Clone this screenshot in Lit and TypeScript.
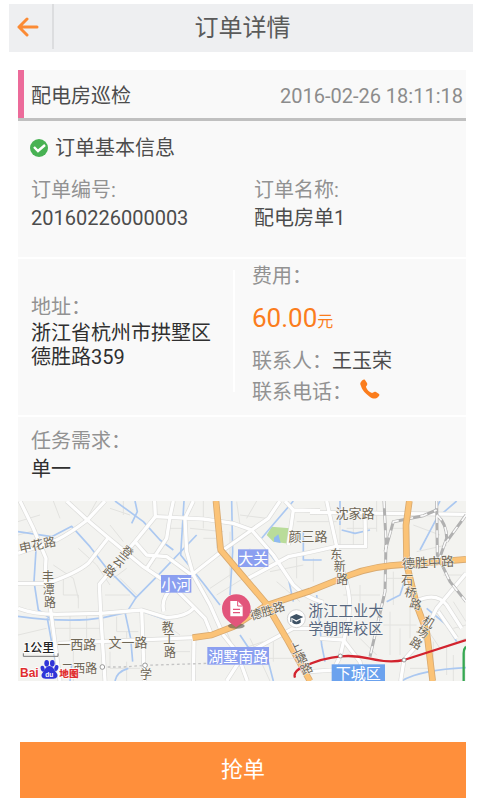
import { LitElement, html, svg, css } from "lit";
import { customElement, property } from "lit/decorators.js";

type Label = { t: string; x: number; y: number; s?: number; r?: number; c?: string };

/* Casing and surface are drawn from the same list of road paths. */
const ROADS = [
  "M30 18 L70 100 L108 190 L105 250 L122 345 L150 558",
  "M170 18 L232 75 L295 128 L400 215 L455 252",
  "M285 18 L232 75 Q180 115 140 135 L24 175",
  "M24 266 L110 266 Q200 235 235 205 L295 128",
  "M434 18 L436 65 L375 140 L268 268 L272 355 L285 558",
  "M24 340 Q70 358 140 358 L272 355 L395 345 L470 368 Q530 365 550 340",
  "M436 65 L580 72 L670 85 L725 105 L790 180 L850 270 Q890 310 940 322",
  "M375 140 L410 180 L470 185 L545 240",
  "M490 18 L480 65 L470 130 L410 220",
  "M145 445 L552 428",
  "M395 345 L403 558",
  "M810 18 L775 70 L725 105 L640 165 L545 240 L490 275 Q450 310 462 350",
  "M550 18 L525 70 L530 170 L550 240 L600 330 L640 420 L680 470 L712 558",
  "M490 275 L550 335 L585 370 L602 412",
  "M552 428 L550 558",
  "M825 18 L850 45 L930 47 M850 45 L835 150",
  "M715 250 L835 185 L900 172 L975 155 L1067 155 L1065 60",
  "M650 558 L700 480 L850 400 L930 400",
  "M950 18 L990 200 L1005 250 Q1030 320 1010 400 L990 485",
  "M930 430 L1000 435 L1050 500 L1060 558",
  "M900 52 L1368 58",
  "M1368 235 L1280 340 L1230 440 L1182 495 L1172 558",
  "M1220 318 Q1280 290 1310 330 L1355 400 M1285 350 L1340 430",
  "M900 530 L970 525 L990 485",
];

const LANES = [
  "M24 80 L90 60 M130 18 L150 70 M24 120 L80 105 M190 100 L220 90 L260 18 M130 210 L190 250 L205 310 M160 250 L160 300 H205 V340",
  "M205 160 L260 210 L300 270 M300 40 L360 60 M340 18 V60 M300 90 L340 140 M330 250 L380 300 M230 358 V440 M180 360 V440 M130 400 H270",
  "M320 365 V410 H385 M350 410 V440 M310 250 L350 220 M285 300 H360 M24 420 L110 400 M190 460 V558 M300 470 V520 H390 M350 560 V500",
  "M470 100 H525 M540 100 L640 110 M580 18 V100 M620 30 V160 M580 130 H625 M680 20 L690 90 M740 18 L710 70 M690 60 L770 70 M860 80 H980",
  "M660 110 V250 M620 300 L700 250 M600 280 L660 240 M720 160 L690 210 M780 230 L880 210 M800 260 L870 320 M860 180 V250 M910 190 V260",
  "M700 460 L760 440 M650 410 L690 500 M720 430 L780 558 M740 490 H850 M790 440 V500 M470 390 L510 420 M470 470 H540",
  "M990 80 V150 M1010 100 H1100 M1030 60 V155 M1100 18 V110 M1140 100 H1180 M1210 90 L1290 120 M1220 170 L1310 150 M1050 270 V320 M1000 300 H1110",
  "M1130 250 H1180 M1150 230 V330 M1120 390 H1220 M1140 350 V480 M1170 400 V480 M1200 330 V430 M1300 240 H1368 M1330 320 L1368 380",
  "M1250 400 L1290 460 L1368 430 M1270 440 V520 M1310 450 V540 M1050 430 L1100 480 M1200 520 H1260 M1330 480 V558 M1330 400 L1368 390",
];

const WATER = [
  "M24 110 L125 125 L185 94 L240 155 L290 220 L378 308 L450 235 L560 120",
  "M315 18 L400 80 L450 135 L490 165",
  "M375 18 L382 50 L365 85",
  "M78 165 L72 260 L85 345 L120 370",
  "M24 364 Q180 385 280 368 L350 352 L378 308",
  "M112 370 L130 470 L150 558 M345 352 L362 430 L368 500 M400 350 L470 375",
  "M522 18 L512 180 L580 265 L630 330 M665 18 L668 170 L660 300",
  "M690 420 L730 480 L775 500 L790 558 M850 18 L780 100 L755 130 M760 150 L835 250 L850 320",
  "M880 110 V195 H935 M990 18 V90 M995 105 L1035 115 L1080 105",
  "M1340 18 L1280 70 L1230 165 M1130 320 L1170 300 L1190 240 M1250 340 L1310 390 L1340 440",
  "M1175 558 Q1230 525 1368 518 M920 300 L935 450 L945 500 M1290 18 L1270 55",
  "M180 558 L185 510 M315 558 Q320 530 355 520",
];

const HIGHWAYS = [
  "M618 18 L632 165 L768 325 L835 440 L900 558",
  "M548 428 L605 420 L670 395 L768 332 L900 288 L1020 240 Q1090 212 1190 208 L1368 193",
  "M1198 18 L1188 90 L1190 208 L1220 330 L1250 410 L1268 558",
];

const RAILS = [
  "M1122 18 L1128 140 L1125 290 L1080 485",
  "M1280 18 L1282 180 L1320 260 L1368 320",
  "M1125 170 L1150 80 L1240 62 L1280 45",
  "M1280 60 Q1310 85 1310 130 L1285 200 M1368 60 L1310 140",
];

const LABELS: Label[] = [
  { t: "申花路", x: 82, y: 148, r: -12, s: 37 },
  { t: "登", x: 354, y: 168, r: 38 },
  { t: "云", x: 330, y: 196, r: 38 },
  { t: "路", x: 302, y: 226, r: 38 },
  { t: "丰", x: 114, y: 242 },
  { t: "潭", x: 116, y: 280 },
  { t: "路", x: 120, y: 319 },
  { t: "一西路", x: 200, y: 446, s: 39 },
  { t: "文一路", x: 354, y: 440, s: 39 },
  { t: "二西路", x: 208, y: 517, s: 36 },
  { t: "学", x: 408, y: 536 },
  { t: "教", x: 473, y: 394 },
  { t: "工", x: 478, y: 431 },
  { t: "路", x: 480, y: 470 },
  { t: "颜三路", x: 894, y: 122, s: 39 },
  { t: "沈家路", x: 1035, y: 53, s: 39 },
  { t: "东", x: 979, y: 174 },
  { t: "新", x: 989, y: 212 },
  { t: "路", x: 997, y: 249 },
  { t: "德胜路", x: 771, y: 344, r: -17 },
  { t: "德胜中路", x: 1254, y: 200, s: 39, r: -3 },
  { t: "石", x: 1192, y: 252 },
  { t: "桥", x: 1203, y: 290, r: 10 },
  { t: "路", x: 1218, y: 324, r: 15 },
  { t: "上", x: 855, y: 456, r: -25 },
  { t: "塘", x: 872, y: 486, r: -25 },
  { t: "路", x: 888, y: 518, r: -25 },
  { t: "机", x: 1258, y: 378, r: 32 },
  { t: "场", x: 1240, y: 408, r: 32 },
  { t: "路", x: 1220, y: 442, r: 32 },
  { t: "浙江工业大", x: 1007, y: 342, s: 45, c: "campus" },
  { t: "学朝晖校区", x: 1007, y: 396, s: 45, c: "campus" },
];

const DISTRICTS = [
  { t: "大关", x: 684, y: 163, w: 91, h: 53 },
  { t: "小河", x: 453, y: 240, w: 91, h: 53 },
  { t: "湖墅南路", x: 592, y: 456, w: 185, h: 53 },
  { t: "下城区", x: 965, y: 508, w: 160, h: 50, c: "city" },
];

@customElement("order-map")
class OrderMap extends LitElement {
  static styles = css`
    :host { display: block; height: 180px; overflow: hidden; }
    svg { display: block; width: 100%; height: 100%; font-family: "Noto Sans CJK SC", sans-serif; }
    .land { fill: #f3f3f0; }
    .line { fill: none; stroke-linejoin: round; }
    .lane { stroke: #e2e2df; stroke-width: 3; }
    .water { stroke: #abc8f1; stroke-width: 5; }
    .casing { stroke: #dcdcda; stroke-width: 14; }
    .road { stroke: #fefefe; stroke-width: 10; }
    .hw-casing { stroke: #d9aa70; stroke-width: 20; }
    .hw { stroke: #fbc377; stroke-width: 15; }
    .rail { stroke: #b0b0b0; stroke-width: 9; }
    .sleeper { stroke: #fafafa; stroke-width: 5; stroke-dasharray: 22 22; }
    .metro { stroke: #d2232e; stroke-width: 7; }
    .metro-green { stroke: #36a852; stroke-width: 7; }
    .station { fill: #fff; stroke: #999; stroke-width: 3; }
    .planned { stroke: #c4c4c4; stroke-width: 4; stroke-dasharray: 8 8; }
    .label { fill: #6e6656; stroke: #f8f8f5; stroke-width: 3; paint-order: stroke; text-anchor: middle; dominant-baseline: central; }
    .campus { fill: #57677f; }
    .district { fill: #8b9ff0; }
    .city { fill: #6ba2ee; }
    .district-name { fill: #fff; font-size: 45px; text-anchor: middle; dominant-baseline: central; }
    .scale { fill: #222; font-size: 36px; font-weight: 500; stroke: #fff; stroke-width: 5; paint-order: stroke; }
    .brand { fill: #e02d2e; font-family: "Liberation Sans", sans-serif; font-weight: bold; font-size: 36px; stroke: #fff; stroke-width: 4; paint-order: stroke; }
    .brand-cn { font-family: "Noto Sans CJK SC", sans-serif; font-size: 29px; font-weight: 900; }
    .paw { fill: #3035d8; }
    .du { fill: #fff; font: bold 20px "Liberation Sans", sans-serif; text-anchor: middle; }
  `;

  render() {
    const lines = (paths: string[], cls: string) => paths.map((d) => svg`<path class="line ${cls}" d=${d} />`);
    return html`
      <svg viewBox="24 18 1344 540" preserveAspectRatio="xMidYMid slice" role="img" aria-label="地图">
        <rect class="land" x="-600" y="0" width="2600" height="600" />
        <path d="M785 95 L840 100 L838 146 L790 140 L770 120 Z" fill="#b9dc9a" />
        <path d="M792 128 L805 118 L812 144 L792 140 Z" fill="#8fb9f2" />
        ${lines(LANES, "lane")} ${lines(WATER, "water")} ${lines(ROADS, "casing")}
        ${lines(ROADS, "road")} ${lines(RAILS, "rail")} ${lines(RAILS, "sleeper")}
        ${lines(HIGHWAYS, "hw-casing")} ${lines(HIGHWAYS, "hw")}
        <path class="line planned" d="M277 516 H340 L405 511 L630 504" />
        <path class="line metro" d="M855 548 Q848 530 880 515 Q940 488 992 484 Q1035 480 1080 491 Q1140 505 1182 495 L1368 435" />
        <path class="line metro-green" d="M1368 455 Q1361 462 1361 475 V558" />
        <circle class="station" cx="991" cy="483" r="6" />
        <circle class="station" cx="1182" cy="495" r="6" />
        <circle class="station" cx="277" cy="516" r="7" />
        <circle class="station" cx="405" cy="511" r="7" />
        ${DISTRICTS.map(
          (d) => svg`<rect class="district ${d.c ?? ""}" x=${d.x} y=${d.y} width=${d.w} height=${d.h} />
            <text class="district-name" x=${d.x + d.w / 2} y=${d.y + d.h / 2 - 1}>${d.t}</text>`,
        )}
        ${LABELS.map(
          (l) => svg`<text class="label ${l.c ?? ""}" x=${l.x} y=${l.y} font-size=${l.s ?? 36}
            transform="rotate(${l.r ?? 0} ${l.x} ${l.y})">${l.t}</text>`,
        )}
        <circle cx="859" cy="371" r="27" fill="#fff" stroke="#d5d5d5" stroke-width="3" />
        <path d="M840 366 L859 357 L880 366 L859 376 Z M847 373 L859 380 L872 373 V383 Q859 392 847 383 Z M841 367 h3 v14 h-3 Z" fill="#3f5366" />
        <ellipse cx="679" cy="393" rx="25" ry="8" fill="#56504a" opacity=".6" />
        <path d="M678 397 C665 384 636 372 636 341 A43 43 0 0 1 722 341 C722 372 692 384 678 397 Z" fill="#e2557b" />
        <path d="M661 318 H683 L698 333 V364 H661 Z" fill="#fff" />
        <path d="M683 318 V333 H698" fill="none" stroke="#e2557b" stroke-width="3" />
        <path d="M669 343 H690 M669 353 H690" stroke="#e2557b" stroke-width="4" />
        <text class="scale" x="40" y="470">1公里</text>
        <path d="M40 475 V484 H144 V475" fill="none" stroke="#777" stroke-width="3" />
        <text class="brand" x="30" y="547">Bai</text>
        <g class="paw">
          <path d="M118 513 C130 513 132 525 139 533 C146 541 142 551 130 551 H107 C95 551 91 541 98 533 C105 525 107 513 118 513 Z" />
          <ellipse cx="98" cy="521" rx="6" ry="9" transform="rotate(-15 98 521)" />
          <ellipse cx="110" cy="505" rx="7" ry="10" />
          <ellipse cx="127" cy="505" rx="7" ry="10" />
          <ellipse cx="139" cy="519" rx="6" ry="9" transform="rotate(15 139 519)" />
        </g>
        <text class="du" x="118" y="546">du</text>
        <text class="brand brand-cn" x="148" y="547">地图</text>
      </svg>
    `;
  }
}

@customElement("app-root")
class AppRoot extends LitElement {
  @property() phone = "";

  static styles = css`
    :host {
      display: block;
      padding: 4px 7px 2px 9px;
      background: #fff;
      color: #4c4c4c;
      font: 20px/28px Roboto, "Noto Sans CJK SC", sans-serif;
    }
    * { box-sizing: border-box; }
    h1, h2, h3, p, dl, dd { margin: 0; font-weight: 400; }
    svg { display: block; }
    .bar { display: grid; grid-template-columns: 45px 1fr 45px; height: 48px; background: #eeeff1; }
    .back { display: grid; place-items: center start; margin-bottom: 3px; padding: 0 0 0 8px; border: 0; border-right: 2px solid #dcdddf; background: none; }
    .title { align-self: center; padding-left: 3px; text-align: center; font-size: 24px; line-height: 36px; color: #5a5a5a; }
    main { padding: 18px 7px 0 9px; }
    .card { background: #f9f9f9; }
    .head { display: flex; align-items: center; justify-content: space-between; height: 51px; padding: 3px 3px 0 13px; box-shadow: inset 6px 0 #ec6b9a; border-bottom: 3px solid #c0c0c0; }
    .name { font-size: 20px; line-height: 28px; }
    .time { font-size: 20px; color: #8c8c8c; }
    .basic { padding: 13px 12px 25px 13px; }
    .subtitle { display: flex; align-items: center; gap: 7px; font-size: 20px; line-height: 28px; margin: 0 0 14px -1px; }
    .cols { display: grid; grid-template-columns: 217fr 231fr; }
    .basic .cols { grid-template-columns: 223fr 200fr; }
    dt, .key { color: #929292; }
    .dark { color: #303030; }
    .place { border-top: 2px solid #fff; border-bottom: 2px solid #fff; padding: 3px 0 8px; }
    .address { display: flex; flex-direction: column; justify-content: center; margin: 8px 0 15px; padding: 0 18px 0 13px; border-right: 2px solid #fff; }
    .address dd { line-height: 24px; }
    .fee { padding-left: 17px; }
    .price { padding: 10px 0 5px; font-size: 26px; line-height: 36px; color: #fb7d1d; }
    .unit { font-size: 16px; }
    .row { display: flex; height: 31px; align-items: center; }
    .call { display: block; margin: -6px 0 0 8px; }
    .need { padding: 10px 12px 18px 13px; }
    .grab { display: block; width: calc(100% - 2px); height: 56px; margin: 61px 0 0 2px; border: 0; background: #ff8f3b; color: #fff; font: 22px/32px Roboto, "Noto Sans CJK SC", sans-serif; }
  `;

  render() {
    return html`
      <header class="bar">
        <button class="back" aria-label="返回">
          <svg width="24" height="22" viewBox="0 0 24 22" fill="none" stroke="#fb8b35" stroke-width="3" stroke-linecap="round" stroke-linejoin="round">
            <path d="M20 11 H2 M10 3 L2 11 L10 19" />
          </svg>
        </button>
        <h1 class="title">订单详情</h1>
      </header>
      <main>
        <article class="card">
          <div class="head">
            <h2 class="name">配电房巡检</h2>
            <time class="time" datetime="2016-02-26T18:11:18">2016-02-26 18:11:18</time>
          </div>
          <section class="basic">
            <h3 class="subtitle">
              <svg width="18" height="18" viewBox="0 0 18 18">
                <circle cx="9" cy="9" r="9" fill="#48b253" />
                <path d="M4 8 L8 12 L15 6" fill="none" stroke="#fff" stroke-width="2.4" />
              </svg>
              订单基本信息
            </h3>
            <dl class="cols">
              <div><dt>订单编号:</dt><dd>20160226000003</dd></div>
              <div><dt>订单名称:</dt><dd>配电房单1</dd></div>
            </dl>
          </section>
          <section class="cols place">
            <dl class="address"><dt>地址：</dt><dd class="dark">浙江省杭州市拱墅区德胜路359</dd></dl>
            <div class="fee">
              <p class="key">费用：</p>
              <p class="price">60.00<span class="unit">元</span></p>
              <p class="row"><span class="key">联系人：</span><span>王玉荣</span></p>
              <p class="row">
                <span class="key">联系电话：</span>
                <a class="call" href="tel:${this.phone}" aria-label="拨打电话">
                  <svg width="20" height="20" viewBox="0 0 20 20">
                    <path d="M1 3 C2 1 4 0 5 1 L7 4 C8 6 6 7 6 8 C7 11 9 13 12 14 C13 14 14 12 16 13 L19 15 C20 16 19 17 18 18 C16 20 13 20 10 18 C6 15 2 11 1 7 C0 5 0 4 1 3 Z" fill="#fb7d1d" />
                  </svg>
                </a>
              </p>
            </div>
          </section>
          <dl class="need"><dt>任务需求：</dt><dd class="dark">单一</dd></dl>
          <order-map></order-map>
        </article>
        <button class="grab">抢单</button>
      </main>
    `;
  }
}
